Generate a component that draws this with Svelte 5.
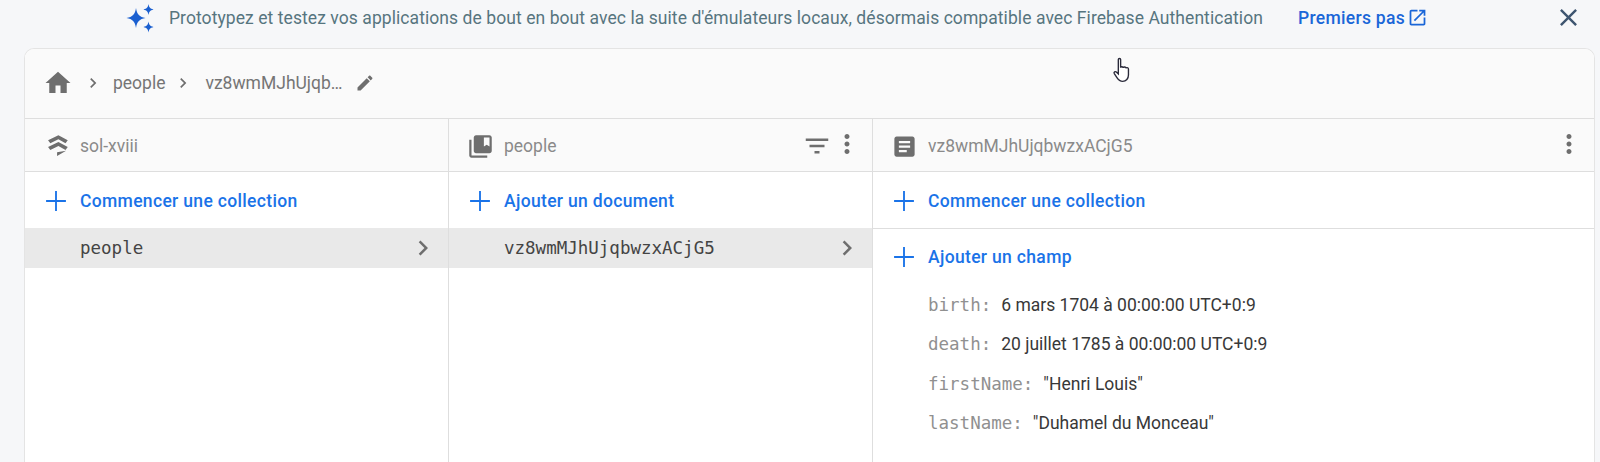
<script>
  const fields = [
    { k: 'birth', v: '6 mars 1704 à 00:00:00 UTC+0:9' },
    { k: 'death', v: '20 juillet 1785 à 00:00:00 UTC+0:9' },
    { k: 'firstName', v: '"Henri Louis"' },
    { k: 'lastName', v: '"Duhamel du Monceau"' }
  ];
  const plus = 'M12 3.500v17M3.500 12h17';
  const chev = 'M10 6L8.59 7.41 13.17 12l-4.58 4.59L10 18l6-6z';
  const vert = 'M12 8c1.1 0 2-.9 2-2s-.9-2-2-2-2 .9-2 2 .9 2 2 2zm0 2c-1.1 0-2 .9-2 2s.9 2 2 2 2-.9 2-2-.9-2-2-2zm0 6c-1.1 0-2 .9-2 2s.9 2 2 2 2-.9 2-2-.9-2-2-2z';
</script>

{#snippet add(label)}
  <div class="action">
    <svg class="plus" viewBox="0 0 24 24"><path d={plus} /></svg>
    <span>{label}</span>
  </div>
{/snippet}

{#snippet row(label)}
  <div class="row">
    <span>{label}</span>
    <svg class="ico rowchev" viewBox="0 0 24 24"><path d={chev} /></svg>
  </div>
{/snippet}

<div class="page">
  <header class="banner">
    <svg class="spark" viewBox="0 0 30 30">
      <path d="M11 5C12 11.500 14.500 14 20.500 15 14.500 16 12 18.500 11 25 10 18.500 7.500 16 1.500 15 7.500 14 10 11.500 11 5z" />
      <path d="M23.500 1C24 4.200 25 5.500 28.500 6.500 25 7.500 24 8.800 23.500 12 23 8.800 22 7.500 18.500 6.500 22 5.500 23 4.200 23.500 1z" />
      <path d="M23.500 18.500C24 21.700 25 23 28.500 24 25 25 24 26.300 23.500 29.500 23 26.300 22 25 18.500 24 22 23 23 21.700 23.500 18.500z" />
    </svg>
    <p class="msg">Prototypez et testez vos applications de bout en bout avec la suite d'émulateurs locaux, désormais compatible avec Firebase Authentication</p>
    <a class="start" href="#top">Premiers pas
      <svg viewBox="0 0 24 24"><path d="M19 19H5V5h7V3H5c-1.110 0-2 .9-2 2v14c0 1.100.89 2 2 2h14c1.100 0 2-.9 2-2v-7h-2v7zM14 3v2h3.590l-9.830 9.830 1.410 1.410L19 6.410V10h2V3h-7z" /></svg>
    </a>
    <svg class="close" viewBox="0 0 24 24"><path d="M19 6.410L17.590 5 12 10.590 6.410 5 5 6.410 10.590 12 5 17.590 6.410 19 12 13.410 17.590 19 19 17.590 13.410 12z" /></svg>
  </header>

  <section class="card">
    <nav class="crumbs">
      <svg class="ico home" viewBox="0 0 24 24"><path d="M10 20v-6h4v6h5v-8h3L12 3 2 12h3v8z" /></svg>
      <svg class="ico cchev one" viewBox="0 0 24 24"><path d={chev} /></svg>
      <span>people</span>
      <svg class="ico cchev two" viewBox="0 0 24 24"><path d={chev} /></svg>
      <span>vz8wmMJhUjqb…</span>
      <svg class="ico pencil" viewBox="0 0 24 24"><path d="M3 17.250V21h3.750L17.810 9.940l-3.750-3.750L3 17.250zM20.710 7.040c.39-.39.39-1.020 0-1.410l-2.340-2.340c-.39-.39-1.020-.39-1.410 0l-1.830 1.830 3.750 3.750 1.830-1.830z" /></svg>
    </nav>

    <div class="cols">
      <div class="col">
        <div class="head">
          <svg class="ico hico" viewBox="0 0 24 24"><path d="M4.500 6.500L13.700 2 22 6.500 20 9 13.700 5.500 6.500 9zM4.500 12.500L13.700 8 22 12.500 20 15 13.700 11.500 6.500 15zM12.500 17L20.500 15.800 12.500 20.500z" /></svg>
          <span class="title">sol-xviii</span>
        </div>
        {@render add('Commencer une collection')}
        {@render row('people')}
      </div>

      <div class="col">
        <div class="head">
          <svg class="ico hico" viewBox="0 0 24 24"><path d="M4 6H2v14c0 1.100.9 2 2 2h14v-2H4V6zM20 2H8c-1.100 0-2 .9-2 2v12c0 1.100.9 2 2 2h12c1.100 0 2-.9 2-2V4c0-1.100-.9-2-2-2zm0 10l-2.500-1.500L15 12V4h5v8z" /></svg>
          <span class="title">people</span>
          <svg class="ico tool" viewBox="0 0 24 24"><path d="M10 18h4v-2h-4v2zM3 6v2h18V6H3zm3 7h12v-2H6v2z" /></svg>
          <svg class="ico tool up" viewBox="0 0 24 24"><path d={vert} /></svg>
        </div>
        {@render add('Ajouter un document')}
        {@render row('vz8wmMJhUjqbwzxACjG5')}
      </div>

      <div class="col last">
        <div class="head">
          <svg class="ico hico" viewBox="0 0 24 24"><path d="M19 3H5c-1.100 0-2 .9-2 2v14c0 1.100.9 2 2 2h14c1.100 0 2-.9 2-2V5c0-1.100-.9-2-2-2zm-5 14H7v-2h7v2zm3-4H7v-2h10v2zm0-4H7V7h10v2z" /></svg>
          <span class="title">vz8wmMJhUjqbwzxACjG5</span>
          <svg class="ico tool up" viewBox="0 0 24 24"><path d={vert} /></svg>
        </div>
        <div class="ruled">{@render add('Commencer une collection')}</div>
        <div class="fieldadd">{@render add('Ajouter un champ')}</div>
        <dl class="fields">
          {#each fields as f}
            <div class="field"><dt>{f.k}:</dt><dd>{f.v}</dd></div>
          {/each}
        </dl>
      </div>
    </div>
  </section>

  <svg class="cursor" viewBox="0 0 20 24">
    <path d="M5.500 2.500c0-1.300 2-1.300 2 0v7c.2-1 2.200-1 2.300.2.200-1 2.200-1 2.300.3.300-.8 2.200-.7 2.200.6v5.400c0 3-2 5.500-5 5.500-2.500 0-3.600-1-5-3.200L2 14.800c-.8-1.300.8-2.500 2-1.300l1.500 1.500z" />
  </svg>
</div>

<style>
  :global(body) {
    margin: 0;
    background: #f6f7f9;
    overflow: hidden;
    font-family: Roboto, "Liberation Sans", sans-serif;
  }
  .page {
    position: relative;
    height: 462px;
    overflow: hidden;
    padding: 0 5px 0 24px;
    box-sizing: border-box;
  }
  .banner {
    display: flex;
    align-items: center;
    height: 48px;
    margin: 0 -5px 0 -24px;
    padding: 0 0 13px 125px;
    box-sizing: border-box;
  }
  .spark {
    width: 30px;
    height: 30px;
    fill: #1a5fd0;
    flex: none;
  }
  .msg {
    margin: 0 0 0 14px;
    font-size: 17.500px;
    letter-spacing: .07px;
    white-space: nowrap;
    color: #56757f;
  }
  .start {
    display: flex;
    align-items: center;
    gap: 2px;
    margin-left: 35px;
    font-size: 17.500px;
    font-weight: 500;
    letter-spacing: .3px;
    white-space: nowrap;
    color: #1a66d8;
    text-decoration: none;
  }
  .start svg {
    width: 21px;
    height: 21px;
    fill: #1a66d8;
    flex: none;
  }
  .close {
    width: 29px;
    height: 29px;
    fill: #3e5570;
    margin-left: 126px;
    flex: none;
  }
  .card {
    height: 500px;
    background: #fff;
    border: 1px solid #e4e4e4;
    border-bottom: 0;
    border-radius: 10px 10px 0 0;
    overflow: hidden;
  }
  .crumbs {
    display: flex;
    align-items: center;
    height: 70px;
    padding: 0 0 1px 18px;
    box-sizing: border-box;
    background: #fafafa;
    border-bottom: 1px solid #dedede;
    font-size: 17.500px;
    color: #757575;
  }
  .ico {
    fill: #6e6e6e;
    flex: none;
  }
  .home { width: 30px; height: 30px; }
  .cchev { width: 20px; height: 20px; }
  .one { margin: 0 10px 0 10px; }
  .two { margin: 0 12px 0 8px; }
  .pencil { width: 20px; height: 20px; margin-left: 12px; }
  .cols {
    display: grid;
    grid-template-columns: 424px 424px 1fr;
  }
  .col {
    border-right: 1px solid #dedede;
    min-height: 400px;
  }
  .col.last { border-right: 0; }
  .head {
    display: flex;
    align-items: center;
    height: 53px;
    padding: 2px 10px 0 18px;
    box-sizing: border-box;
    background: #fafafa;
    border-bottom: 1px solid #dedede;
  }
  .hico { width: 27px; height: 27px; margin-right: 10px; }
  .title {
    flex: 1;
    font-size: 17.500px;
    color: #8a8a8a;
  }
  .tool { width: 30px; height: 30px; }
  .up { margin-bottom: 4px; }
  .action {
    display: flex;
    align-items: center;
    height: 56px;
    padding: 2px 0 0 17px;
    box-sizing: border-box;
    font-size: 17.500px;
    font-weight: 500;
    letter-spacing: .33px;
    color: #1a73e8;
  }
  .plus {
    width: 28px;
    height: 28px;
    margin-right: 10px;
    fill: none;
    stroke: #1a73e8;
    stroke-width: 1.600;
    flex: none;
  }
  .ruled { border-bottom: 1px solid #dedede; }
  .fieldadd { margin-top: -1px; }
  .row {
    display: flex;
    align-items: center;
    justify-content: space-between;
    height: 40px;
    padding: 0 10px 0 55px;
    background: #e9e9e9;
    font-family: "DejaVu Sans Mono", "Liberation Mono", monospace;
    font-size: 17.500px;
    color: #444;
  }
  .rowchev { width: 30px; height: 30px; }
  .fields { margin: 1px 0 0; padding-left: 55px; }
  .field {
    display: flex;
    align-items: center;
    height: 39.500px;
    font-size: 17.500px;
  }
  dt {
    font-family: "DejaVu Sans Mono", "Liberation Mono", monospace;
    color: #909090;
    margin-right: 10px;
  }
  dd { margin: 0; color: #383838; }
  .cursor {
    position: absolute;
    left: 1112px;
    top: 56px;
    width: 23px;
    height: 29px;
    fill: #fff;
    stroke: #2a2a3a;
    stroke-width: 1.200;
  }
</style>
